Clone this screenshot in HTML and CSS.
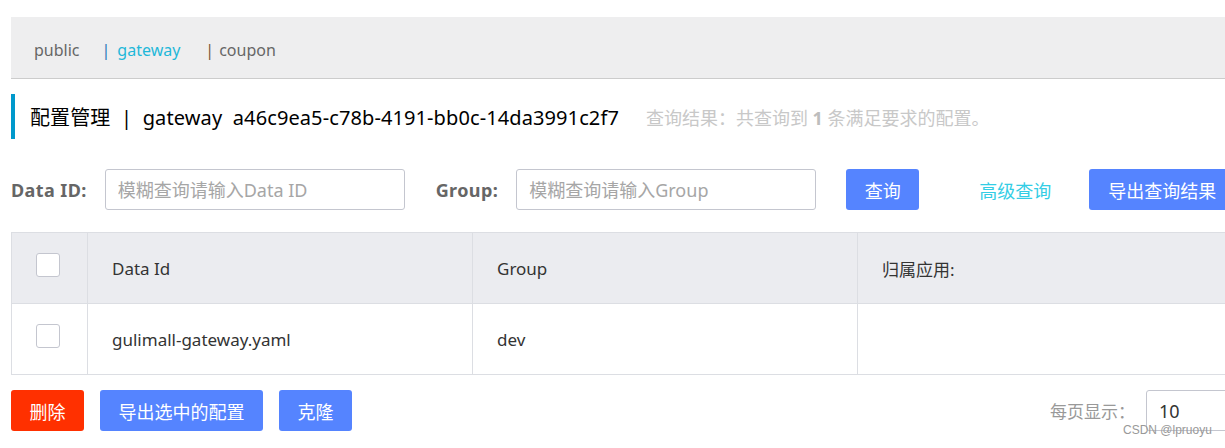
FILE: index.html
```html
<!DOCTYPE html>
<html lang="zh-CN">
<head>
  <meta charset="UTF-8">
  <title>配置管理</title>
  <link rel="stylesheet" href="styles.css">
</head>
<body>
  <div class="page">
    <div class="ns-bar">
      <span class="ns-item">public</span>
      <span class="ns-sep ns-sep-blue">|</span><span class="ns-item active">gateway</span>
      <span class="ns-sep">|</span><span class="ns-item">coupon</span>
    </div>

    <div class="title-bar">
      <span class="title">配置管理 &nbsp;|&nbsp; gateway &nbsp;a46c9ea5-c78b-4191-bb0c-14da3991c2f7</span>
      <span class="result">查询结果：共查询到 <b>1</b> 条满足要求的配置。</span>
    </div>

    <div class="search-row">
      <label class="field-label">Data ID:</label>
      <input class="field-input" type="text" placeholder="模糊查询请输入Data ID">
      <label class="field-label group-label">Group:</label>
      <input class="field-input" type="text" placeholder="模糊查询请输入Group">
      <button class="btn btn-primary btn-query">查询</button>
      <a class="link-advanced">高级查询</a>
      <button class="btn btn-primary btn-export">导出查询结果</button>
    </div>

    <table class="cfg-table">
      <thead>
        <tr>
          <th class="col-check"><span class="checkbox"></span></th>
          <th class="col-id">Data Id</th>
          <th class="col-group">Group</th>
          <th class="col-app">归属应用:</th>
        </tr>
      </thead>
      <tbody>
        <tr>
          <td class="col-check"><span class="checkbox"></span></td>
          <td>gulimall-gateway.yaml</td>
          <td>dev</td>
          <td></td>
        </tr>
      </tbody>
    </table>

    <div class="footer-row">
      <button class="btn btn-danger">删除</button>
      <button class="btn btn-primary btn-wide">导出选中的配置</button>
      <button class="btn btn-primary">克隆</button>
      <span class="page-size-label">每页显示：</span>
      <div class="page-size">10</div>
    </div>
  </div>
  <div class="watermark">CSDN @lpruoyu</div>
</body>
</html>
```

FILE: styles.css
```css
* {
  margin: 0;
  padding: 0;
  box-sizing: border-box;
  font-family: "Noto Sans", "Noto Sans CJK SC", sans-serif;
}
body {
  background: #fff;
  overflow: hidden;
  width: 1225px;
  height: 448px;
  position: relative;
}
.page {
  width: 1300px;
  padding: 17px 0 0 11px;
}
.ns-bar {
  height: 62px;
  background: #eeeeef;
  border-bottom: 1px solid #cccccc;
  display: flex;
  align-items: center;
  padding: 4px 0 0 23px;
  font-size: 16px;
  color: #666;
}
.ns-item.active {
  color: #1fb8d9;
}
.ns-sep {
  margin-left: 25px;
  margin-right: 5px;
  color: #7a5a34;
}
.ns-sep-blue {
  color: #2a7ab8;
  margin-left: 22px;
  margin-right: 7px;
}
.title-bar {
  margin-top: 15px;
  height: 45px;
  border-left: 4px solid #0099cc;
  padding-left: 15px;
  display: flex;
  align-items: center;
}
.title {
  font-size: 20px;
  color: #000;
  letter-spacing: 0.1px;
}
.result {
  margin-left: 27px;
  font-size: 18px;
  color: #c8c8c8;
}
.result b {
  color: #bdbdbd;
}
.search-row {
  margin-top: 30px;
  height: 41px;
  display: flex;
  align-items: center;
}
.field-label {
  font-size: 18px;
  font-weight: bold;
  color: #666;
  margin-right: 18px;
  letter-spacing: 0.4px;
}
.group-label {
  margin-left: 31px;
}
.field-input {
  width: 300px;
  height: 41px;
  border: 1px solid #c4c6cf;
  border-radius: 3px;
  padding: 0 12px;
  font-size: 18px;
  outline: none;
}
.field-input::placeholder {
  color: #a6a6a6;
}
.btn {
  height: 41px;
  border: none;
  border-radius: 3px;
  color: #fff;
  font-size: 18px;
  padding: 0 18px;
  min-width: 73px;
  cursor: pointer;
}
.btn-primary {
  background: #5584ff;
}
.btn-danger {
  background: #ff3000;
}
.btn-query {
  margin-left: 30px;
}
.link-advanced {
  margin-left: 60px;
  font-size: 18px;
  color: #33cde5;
}
.btn-export {
  margin-left: 38px;
  width: 150px;
  text-align: left;
  padding-left: 19px;
}
.cfg-table {
  margin-top: 22px;
  border-collapse: collapse;
  width: 1300px;
  font-size: 17px;
  color: #333;
  table-layout: fixed;
}
.cfg-table th,
.cfg-table td {
  height: 71px;
  border: 1px solid #dcdee3;
  text-align: left;
  font-weight: normal;
  padding-left: 24px;
}
.cfg-table th {
  background: #ebecf0;
}
.cfg-table .col-check {
  width: 76px;
}
.col-id,
.col-group {
  width: 385px;
}
.checkbox {
  display: block;
  width: 24px;
  height: 24px;
  margin-bottom: 6px;
  background: #fff;
  border: 1px solid #c4c6cf;
  border-radius: 3px;
}
.footer-row {
  margin-top: 15px;
  display: flex;
  align-items: center;
  gap: 16px;
}
.btn-wide {
  width: 163px;
}
.page-size-label {
  margin-left: 682px;
  font-size: 17px;
  color: #999;
}
.page-size {
  margin-left: -5px;
  width: 120px;
  height: 41px;
  border: 1px solid #c4c6cf;
  border-radius: 3px;
  display: flex;
  align-items: center;
  padding-left: 12px;
  font-size: 18px;
  color: #333;
}
.watermark {
  position: absolute;
  left: 1123px;
  top: 423px;
  font-size: 12px;
  color: #999;
  font-family: "Liberation Sans", sans-serif;
}
```
